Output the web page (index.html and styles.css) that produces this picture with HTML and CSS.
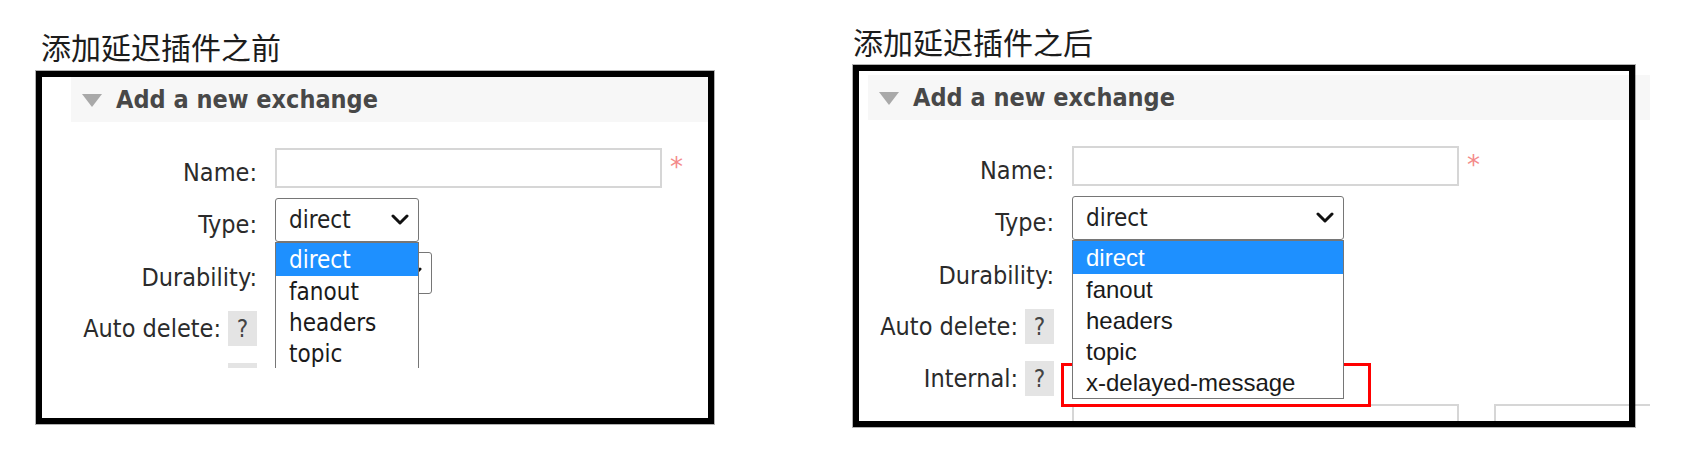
FILE: index.html
```html
<!DOCTYPE html>
<html lang="zh-CN">
<head>
<meta charset="utf-8">
<title>Exchange types</title>
<link rel="stylesheet" href="styles.css">
</head>
<body>
<div class="page">
  <section class="panel panel-before">
    <h2 class="caption">添加延迟插件之前</h2>
    <div class="stage stage-before">
      <div class="shot shot-before">
        <div class="section-head"><span class="tri"></span><span class="head-text">Add a new exchange</span></div>
        <div class="form">
          <div class="frow row-name">
            <div class="flabel low">Name:</div>
            <div class="fctl"><span class="tinput"></span><span class="req">*</span></div>
          </div>
          <div class="frow row-type">
            <div class="flabel low">Type:</div>
            <div class="fctl dd-anchor">
              <div class="select sel-narrow"><span>direct</span><svg class="chev" viewBox="0 0 18 12"><polyline points="2,2 9,9 16,2"/></svg></div>
              <ul class="dd-list">
                <li class="sel">direct</li>
                <li>fanout</li>
                <li>headers</li>
                <li>topic</li>
              </ul>
            </div>
          </div>
          <div class="frow row-dur">
            <div class="flabel low">Durability:</div>
            <div class="fctl"><div class="select sel-dur"><span>Durable</span><svg class="chev" viewBox="0 0 18 12"><polyline points="2,2 9,9 16,2"/></svg></div></div>
          </div>
          <div class="frow row-help">
            <div class="flabel">Auto delete: <span class="help">?</span></div>
          </div>
          <div class="frow row-help">
            <div class="flabel">Internal: <span class="help">?</span></div>
          </div>
        </div>
      </div>
    </div>
  </section>

  <section class="panel panel-after">
    <h2 class="caption">添加延迟插件之后</h2>
    <div class="stage stage-after">
      <div class="shot shot-after">
        <div class="section-head"><span class="tri"></span><span class="head-text">Add a new exchange</span></div>
        <div class="form">
          <div class="frow row-name">
            <div class="flabel low">Name:</div>
            <div class="fctl"><span class="tinput"></span><span class="req">*</span></div>
          </div>
          <div class="frow row-type">
            <div class="flabel low">Type:</div>
            <div class="fctl dd-anchor">
              <div class="select sel-wide"><span>direct</span><svg class="chev" viewBox="0 0 18 12"><polyline points="2,2 9,9 16,2"/></svg></div>
              <ul class="dd-list dd-arial">
                <li class="sel">direct</li>
                <li>fanout</li>
                <li>headers</li>
                <li>topic</li>
                <li>x-delayed-message</li>
              </ul>
            </div>
          </div>
          <div class="frow row-dur">
            <div class="flabel low">Durability:</div>
            <div class="fctl"><div class="select sel-dur"><span>Durable</span><svg class="chev" viewBox="0 0 18 12"><polyline points="2,2 9,9 16,2"/></svg></div></div>
          </div>
          <div class="frow row-help">
            <div class="flabel">Auto delete: <span class="help">?</span></div>
          </div>
          <div class="frow row-help">
            <div class="flabel">Internal: <span class="help">?</span></div>
          </div>
          <div class="frow row-args">
            <div class="flabel"></div>
            <div class="fctl args"><span class="tinput"></span><span class="eq">=</span><span class="tinput tinput-val"></span></div>
          </div>
        </div>
      </div>
      <div class="mark"></div>
    </div>
  </section>
</div>
</body>
</html>
```

FILE: styles.css
```css
* { box-sizing: border-box; }
html, body { margin: 0; background: #fff; }
body {
  width: 1684px;
  height: 472px;
  overflow: hidden;
  font-family: "DejaVu Sans Condensed", "Liberation Sans", sans-serif;
  color: #2b2b2b;
}
.page { display: flex; align-items: flex-start; }
.panel { display: flex; flex-direction: column; }
.panel-before { margin-left: 36px; padding-top: 26px; }
.panel-after { margin-left: 139px; padding-top: 21px; }

.caption {
  margin: 0;
  font-family: "Noto Sans CJK SC", sans-serif;
  font-weight: 400;
  font-size: 30px;
  line-height: 40px;
  color: #1c1c1c;
}
.panel-before .caption { padding-left: 5px; }

.stage { position: relative; padding: 6px; }
.stage::after {
  content: "";
  position: absolute;
  inset: 0;
  border: 6px solid #000;
  box-shadow: 0 0 0 1px rgba(0, 0, 0, 0.3);
  pointer-events: none;
}
.stage-before { margin-top: 5px; width: 678px; height: 353px; }
.stage-after { margin-top: 4px; width: 782px; height: 362px; }

.shot { overflow: hidden; background: #fff; }
.shot-before { width: 666px; height: 291px; padding-left: 29px; }
.shot-after { width: 791px; height: 350px; padding-left: 9px; padding-top: 4px; }

.section-head {
  height: 45px;
  background: #f7f7f7;
  display: flex;
  align-items: center;
  padding-left: 11px;
  gap: 14px;
}
.tri {
  width: 0;
  height: 0;
  border-left: 10px solid transparent;
  border-right: 10px solid transparent;
  border-top: 13px solid #a9a9a9;
  margin-top: 2px;
}
.head-text {
  font-weight: 700;
  font-size: 25px;
  color: #484848;
  white-space: nowrap;
}

.form { padding-top: 26px; }
.frow { display: flex; align-items: center; gap: 18px; }
.row-name { height: 40px; }
.row-type { height: 44px; margin-top: 10px; }
.row-dur { height: 42px; margin-top: 10px; }
.row-help { height: 35px; margin-top: 17px; }
.row-args { height: 40px; margin-top: 8px; }

.flabel {
  width: 186px;
  flex: none;
  display: flex;
  justify-content: flex-end;
  align-items: center;
  gap: 7px;
  font-size: 25px;
  color: #2b2b2b;
  white-space: nowrap;
}
.flabel.low { padding-top: 9px; }

.fctl { display: flex; align-items: flex-start; height: 100%; }

.tinput {
  display: block;
  width: 387px;
  height: 40px;
  border: 2px solid #d6d6d6;
  background: #fff;
}
.req {
  margin-left: 8px;
  margin-top: 5px;
  font-family: "DejaVu Sans", sans-serif;
  font-size: 26px;
  line-height: 28px;
  color: #f48a8a;
}

.select {
  height: 44px;
  border: 1px solid #767676;
  border-radius: 3px;
  background: #fff;
  display: flex;
  align-items: center;
  justify-content: space-between;
  padding: 0 9px 0 13px;
  font-size: 24px;
  color: #222;
}
.sel-narrow { width: 144px; }
.sel-wide { width: 272px; }
.sel-dur { width: 157px; height: 42px; }
.chev { width: 18px; height: 12px; flex: none; }
.chev polyline { fill: none; stroke: #111; stroke-width: 3; stroke-linecap: round; stroke-linejoin: round; }

.dd-anchor { position: relative; }
.dd-list {
  position: absolute;
  left: 0;
  top: 44px;
  width: 100%;
  margin: 0;
  padding: 0;
  list-style: none;
  border: 1px solid #767676;
  background: #fff;
  font-size: 24px;
  color: #1a1a1a;
  z-index: 1;
}
.dd-list li {
  height: 31px;
  padding-left: 13px;
  display: flex;
  align-items: center;
  white-space: nowrap;
}
.dd-list li.sel { height: 33px; background: #1e90ff; color: #fff; }
.dd-arial { font-family: "Liberation Sans", Arial, sans-serif; }

.help {
  width: 29px;
  height: 35px;
  flex: none;
  background: #e4e4e4;
  display: flex;
  align-items: center;
  justify-content: center;
  color: #444;
  font-size: 24px;
}

.args { align-items: center; gap: 0; }
.eq { margin: 0 10px 0 11px; font-size: 24px; color: #333; width: 14px; }
.tinput-val { width: 300px; }

.mark {
  position: absolute;
  left: 208px;
  top: 298px;
  width: 310px;
  height: 44px;
  border: 3px solid #f00;
  pointer-events: none;
}
```
